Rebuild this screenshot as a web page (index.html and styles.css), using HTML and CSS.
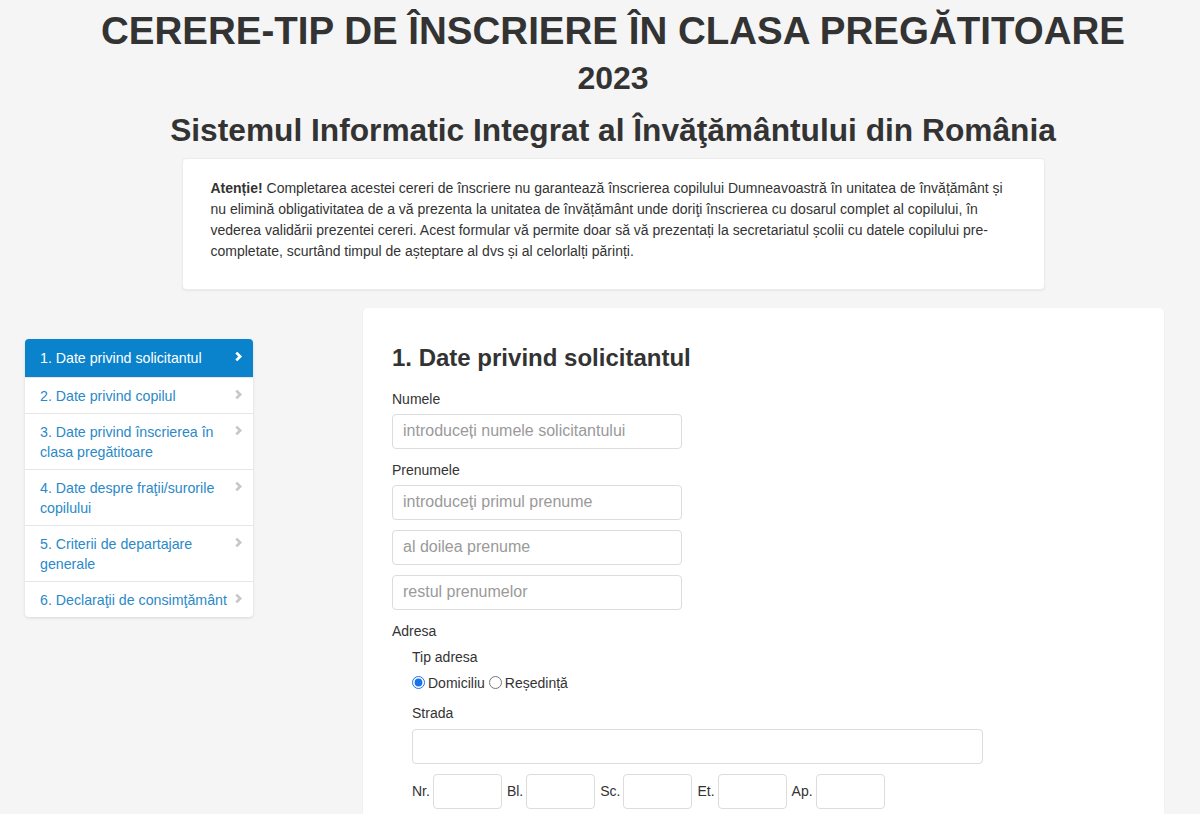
FILE: index.html
```html
<!DOCTYPE html>
<html lang="ro">
<head>
  <meta charset="UTF-8" />
  <title>Cerere-tip de înscriere în clasa pregătitoare 2023</title>
  <meta name="viewport" content="width=device-width, initial-scale=1.0" />
  <link rel="stylesheet" href="styles.css">
</head>
<body>
  <div class="top">
    <header class="page-header">
      <h1 class="title">CERERE-TIP DE ÎNSCRIERE ÎN CLASA PREGĂTITOARE</h1>
      <h2 class="year">2023</h2>
      <h2 class="subtitle">Sistemul Informatic Integrat al Învăţământului din România</h2>
    </header>

    <div class="notice">
      <p><strong>Atenție!</strong> Completarea acestei cereri de înscriere nu garantează înscrierea copilului Dumneavoastră în unitatea de învățământ și nu elimină obligativitatea de a vă prezenta la unitatea de învățământ unde doriţi înscrierea cu dosarul complet al copilului, în vederea validării prezentei cereri. Acest formular vă permite doar să vă prezentați la secretariatul școlii cu datele copilului pre-completate, scurtând timpul de așteptare al dvs și al celorlalți părinți.</p>
    </div>
  </div>

  <div class="main-row">
    <!-- Steps -->
    <nav class="steps">
      <a class="step active" href="#"><span>1. Date privind solicitantul</span><svg class="chev" viewBox="0 0 8 10"><polyline points="2,1.5 5.5,5 2,8.5" /></svg></a>
      <a class="step" href="#"><span>2. Date privind copilul</span><svg class="chev" viewBox="0 0 8 10"><polyline points="2,1.5 5.5,5 2,8.5" /></svg></a>
      <a class="step" href="#"><span>3. Date privind înscrierea în clasa pregătitoare</span><svg class="chev" viewBox="0 0 8 10"><polyline points="2,1.5 5.5,5 2,8.5" /></svg></a>
      <a class="step" href="#"><span>4. Date despre fraţii/surorile copilului</span><svg class="chev" viewBox="0 0 8 10"><polyline points="2,1.5 5.5,5 2,8.5" /></svg></a>
      <a class="step" href="#"><span>5. Criterii de departajare generale</span><svg class="chev" viewBox="0 0 8 10"><polyline points="2,1.5 5.5,5 2,8.5" /></svg></a>
      <a class="step" href="#"><span>6. Declaraţii de consimţământ</span><svg class="chev" viewBox="0 0 8 10"><polyline points="2,1.5 5.5,5 2,8.5" /></svg></a>
    </nav>

    <!-- Form -->
    <section class="panel">
      <h3>1. Date privind solicitantul</h3>

      <div class="form-group">
        <label>Numele</label>
        <input class="field" type="text" placeholder="introduceți numele solicitantului">
      </div>

      <div class="form-group">
        <label>Prenumele</label>
        <input class="field" type="text" placeholder="introduceţi primul prenume">
        <input class="field stacked" type="text" placeholder="al doilea prenume">
        <input class="field stacked" type="text" placeholder="restul prenumelor">
      </div>

      <div class="form-group">
        <label>Adresa</label>
        <div class="address">
          <label class="sub">Tip adresa</label>
          <div class="radios">
            <label><input type="radio" name="tip" checked> Domiciliu</label>
            <label><input type="radio" name="tip"> Reședință</label>
          </div>

          <label class="sub gap">Strada</label>
          <input class="field street" type="text">

          <div class="number-row">
            <label>Nr.</label><input class="field small" type="text">
            <label>Bl.</label><input class="field small" type="text">
            <label>Sc.</label><input class="field small" type="text">
            <label>Et.</label><input class="field small" type="text">
            <label>Ap.</label><input class="field small" type="text">
          </div>
        </div>
      </div>
    </section>
  </div>
</body>
</html>
```

FILE: styles.css
```css
:root {
  --bg: #f5f5f5;
  --text: #333;
  --link: #2a89c8;
  --active: #0b83cc;
  --line: #e6e6e6;
  --input-border: #dcdcdc;
}

body {
  margin: 0;
  background: var(--bg);
  color: var(--text);
  font-family: "Liberation Sans", Arial, sans-serif;
  font-size: 14px;
  line-height: 20px;
}

.top {
  padding-left: 26px;
}

.page-header {
  text-align: center;
}

.page-header h1,
.page-header h2 {
  font-weight: bold;
  line-height: 1.1;
  margin: 0;
}

.title {
  font-size: 38.5px;
  padding-top: 10px;
}

.year {
  font-size: 32px;
  margin-top: 9px !important;
}

.subtitle {
  font-size: 31.7px;
  margin-top: 16px !important;
}

.notice {
  width: 805px;
  margin: 11px auto 0;
  padding: 19px 28px 28px;
  background: #fff;
  border: 1px solid #ececec;
  border-radius: 4px;
  box-shadow: 0 1px 2px rgba(0,0,0,0.06);
  line-height: 20.7px;
}

.notice p {
  margin: 0;
}

.main-row {
  display: flex;
  align-items: flex-start;
  padding-left: 25px;
  margin-top: 18px;
}

/* Steps sidebar */
.steps {
  width: 228px;
  margin-top: 31px;
  background: #fff;
  border-radius: 4px;
  box-shadow: 0 1px 3px rgba(0,0,0,0.12);
  overflow: hidden;
}

.step {
  display: flex;
  align-items: flex-start;
  padding: 7.5px 10px 7.5px 15px;
  color: var(--link);
  text-decoration: none;
  border-top: 1px solid var(--line);
}

.step:first-child {
  border-top: none;
  padding-top: 9px;
  padding-bottom: 9px;
}

.step:last-child {
  padding-bottom: 7px;
}

.step span {
  flex: 1;
  font-size: 14.2px;
}

.step.active {
  background: var(--active);
  color: #fff;
}

.chev {
  width: 9px;
  height: 11px;
  margin-top: 3px;
  margin-left: 4px;
  fill: none;
  stroke: #c8c8c8;
  stroke-width: 2.5;
}

.step.active .chev {
  stroke: #fff;
}

/* Form panel */
.panel {
  width: 772px;
  margin-left: 110px;
  padding: 37px 0 40px 29px;
  background: #fff;
  border-radius: 5px;
  box-shadow: 0 1px 2px rgba(0,0,0,0.07);
}

.panel h3 {
  font-size: 24px;
  line-height: 1.1;
  margin: 0 0 17px;
}

.form-group {
  margin-bottom: 11px;
}

.form-group > label,
.sub {
  display: block;
  margin-bottom: 5px;
}

.field {
  display: block;
  box-sizing: border-box;
  width: 290px;
  height: 35px;
  padding: 0 10px;
  border: 1px solid var(--input-border);
  border-radius: 4px;
  background: #fff;
  font-family: "Liberation Sans", Arial, sans-serif;
  font-size: 16px;
  color: var(--text);
}

.field::placeholder {
  color: #9a9a9a;
}

.stacked {
  margin-top: 10px;
}

.address {
  padding-left: 20px;
  padding-top: 1px;
}

.sub {
  margin-bottom: 6px;
}

.radios {
  display: flex;
  align-items: center;
  gap: 4px;
}

.radios label {
  display: flex;
  align-items: center;
}

.radios input {
  margin: 0 3px 0 0;
  width: 13px;
  height: 13px;
  accent-color: #1a73e8;
}

.sub.gap {
  margin-top: 10px;
}

.street {
  width: 571px;
}

.number-row {
  display: flex;
  align-items: center;
  margin-top: 10px;
}

.number-row label {
  margin-right: 3px;
}

.number-row .small {
  width: 69px;
  margin-right: 5px;
}
```
